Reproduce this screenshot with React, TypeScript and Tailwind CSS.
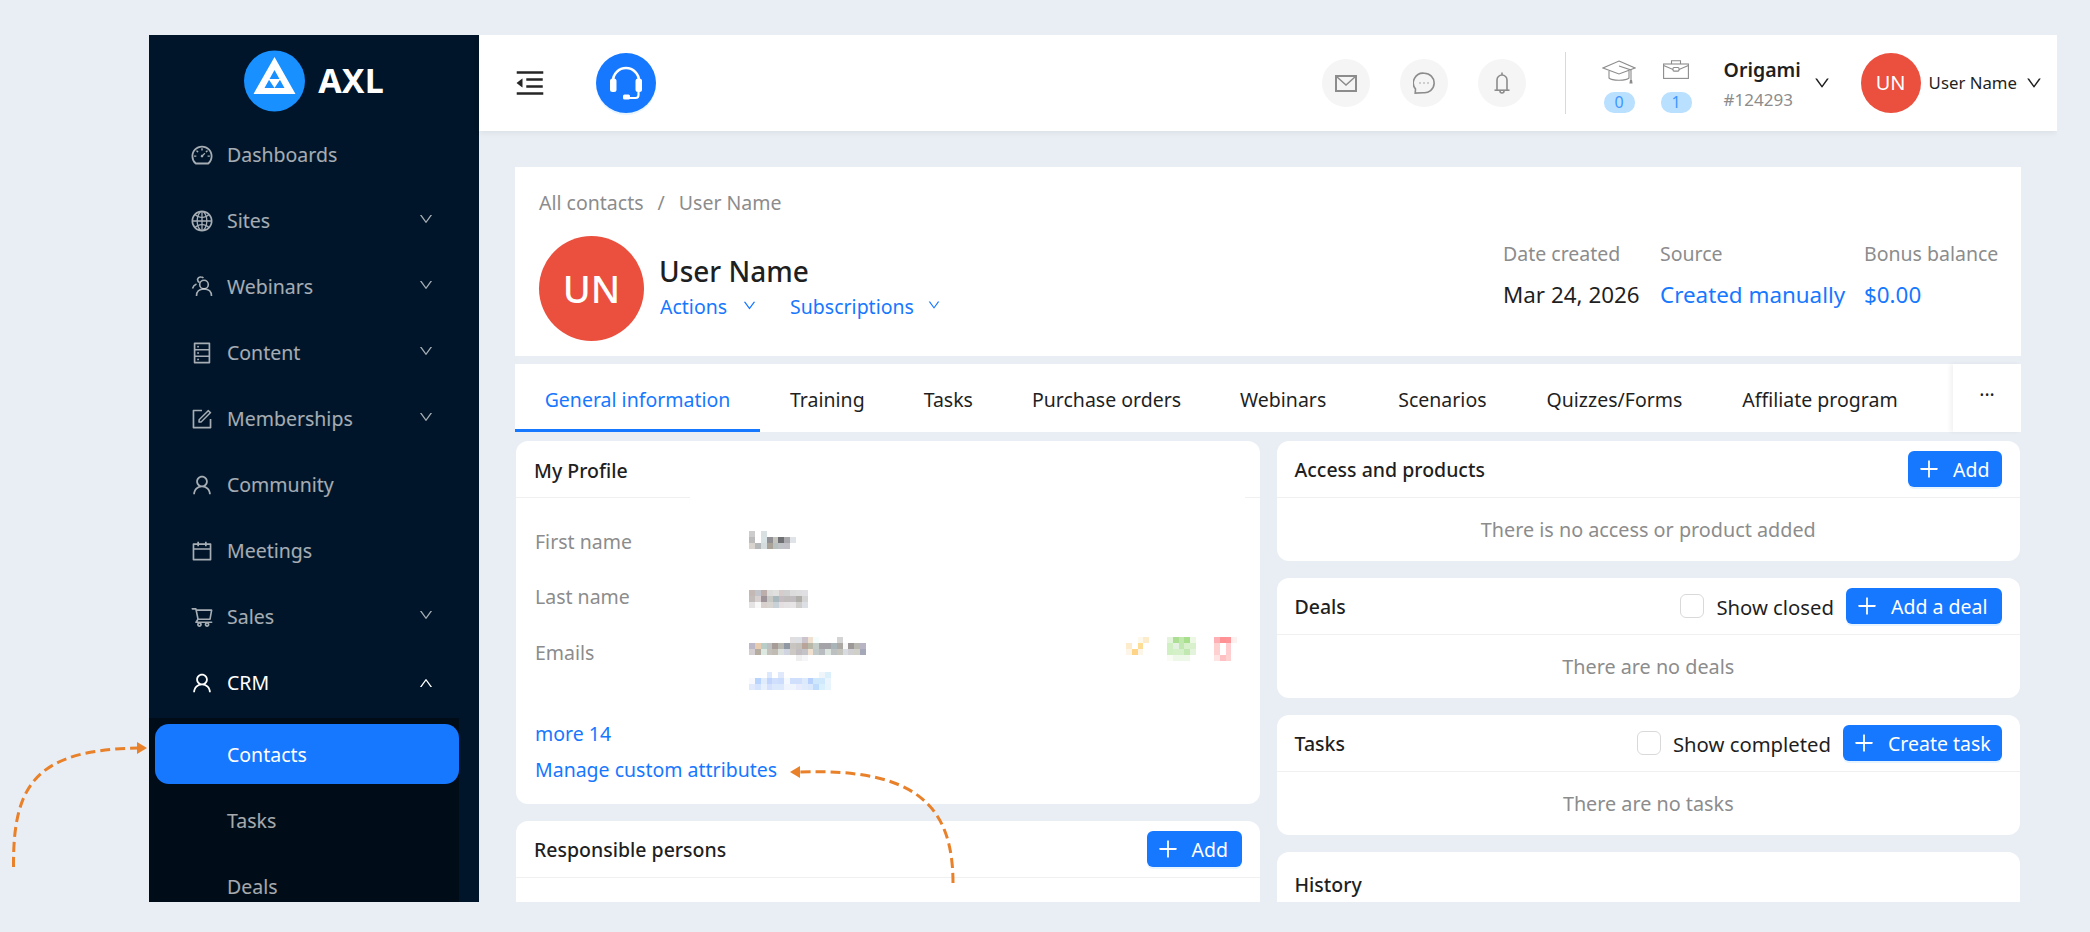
import {
  AiOutlineCalendar,
  AiOutlineDashboard,
  AiOutlineDatabase,
  AiOutlineDown,
  AiOutlineForm,
  AiOutlineGlobal,
  AiOutlineMenuFold,
  AiOutlinePlus,
  AiOutlineShoppingCart,
  AiOutlineUp,
  AiOutlineUser,
} from 'react-icons/ai';
import type { ReactNode } from 'react';

function WebinarIcon() {
  return (
    <svg width="24" height="24" viewBox="0 0 24 24" fill="none" stroke="currentColor" strokeWidth="1.6">
      <circle cx="14" cy="9.5" r="4.3" />
      <path d="M6.5 21c0-4.6 3-7 7.5-7s7.5 2.4 7.5 7" />
      <path d="M9.5 7.5A3.6 3.6 0 0 1 7.5 4.4 3.4 3.4 0 0 1 11 2c1 0 1.8.3 2.4 1" />
      <path d="M2.5 13.5c.6-2.2 2-3.6 4-4.4" />
    </svg>
  );
}

const menu = [
  { label: 'Dashboards', icon: <AiOutlineDashboard size={24} /> },
  { label: 'Sites', icon: <AiOutlineGlobal size={24} />, arrow: true },
  { label: 'Webinars', icon: <WebinarIcon />, arrow: true },
  { label: 'Content', icon: <AiOutlineDatabase size={24} />, arrow: true },
  { label: 'Memberships', icon: <AiOutlineForm size={24} />, arrow: true },
  { label: 'Community', icon: <AiOutlineUser size={24} /> },
  { label: 'Meetings', icon: <AiOutlineCalendar size={24} /> },
  { label: 'Sales', icon: <AiOutlineShoppingCart size={24} />, arrow: true },
];

function Sidebar() {
  return (
    <aside className="w-[330px] shrink-0 bg-[#001529] text-[19.5px] text-white/65">
      <div className="h-[90px] pt-[15px] flex justify-center">
        <div className="flex items-start gap-[13px]">
          <svg width="61" height="62" viewBox="0 0 61 62">
            <circle cx="30.5" cy="31" r="30.5" fill="#1890ff" />
            <path d="M30.5 7 L51.5 44 H9.5 Z M30.5 20 L20.5 38 H40.5 Z" fill="#fff" fillRule="evenodd" />
            <path d="M24.5 29 H36.5 L30.5 38 Z" fill="#fff" />
          </svg>
          <span className="text-[34px] font-bold text-white leading-[60px]">AXL</span>
        </div>
      </div>
      {menu.map(item => (
        <div key={item.label} className="h-[60px] mb-[6px] pl-[41px] pr-[45px] flex items-center">
          <span className="w-[24px] flex justify-center">{item.icon}</span>
          <span className="ml-[13px]">{item.label}</span>
          {item.arrow && <AiOutlineDown size={16} className="ml-auto -translate-y-[2px]" />}
        </div>
      ))}
      <div className="h-[60px] pl-[41px] pr-[45px] flex items-center text-white">
        <span className="w-[24px] flex justify-center"><AiOutlineUser size={24} /></span>
        <span className="ml-[13px]">CRM</span>
        <AiOutlineUp size={16} className="ml-auto" />
      </div>
      <div className="w-[310px] mt-[5px] pt-[6px] pb-[20px] bg-[#000c17]">
        <div className="ml-[6px] h-[60px] pl-[72px] pt-[2px] flex items-center rounded-[14px] bg-[#1677ff] text-white">Contacts</div>
        <div className="ml-[6px] h-[60px] mt-[6px] pl-[72px] pt-[2px] flex items-center">Tasks</div>
        <div className="ml-[6px] h-[60px] mt-[6px] pl-[72px] pt-[2px] flex items-center">Deals</div>
      </div>
    </aside>
  );
}

function RoundIcon({ children }: { children: ReactNode }) {
  return <div className="w-[48px] h-[48px] rounded-full bg-[#f5f5f5] flex items-center justify-center text-[#8c8c8c]">{children}</div>;
}

function Header() {
  return (
    <header className="h-[96px] shrink-0 bg-white shadow-[0_2px_6px_rgba(0,0,0,0.06)] flex items-center pl-[34px] pr-[14px]">
      <AiOutlineMenuFold size={34} className="text-[#262626]" />
      <div className="ml-[49px] w-[60px] h-[60px] rounded-full bg-[#1677ff] shadow-[0_2px_0_rgba(5,145,255,0.1)]">
        <svg width="60" height="60" viewBox="0 0 60 60" fill="none" stroke="#fff">
          <path d="M17 28 A13 13 0 0 1 43 28" strokeWidth="2.6" />
          <rect x="14" y="25.5" width="6.5" height="13.5" rx="2.5" fill="#fff" stroke="none" />
          <rect x="39.5" y="25.5" width="6.5" height="13.5" rx="2.5" fill="#fff" stroke="none" />
          <path d="M42.5 39 v3 q0 3 -3 3 H30" strokeWidth="2.2" />
          <rect x="27" y="41.5" width="7" height="5" rx="1.5" fill="#fff" stroke="none" />
        </svg>
      </div>
      <div className="ml-auto flex items-center gap-[30px]">
        <RoundIcon>
          <svg width="22" height="17" viewBox="0 0 22 17" fill="none" stroke="currentColor" strokeWidth="2">
            <rect x="1" y="1" width="20" height="15" />
            <path d="M1.5 1.5 L11 10 L20.5 1.5" strokeWidth="1.5" />
          </svg>
        </RoundIcon>
        <RoundIcon>
          <svg width="22" height="22" viewBox="0 0 22 22" fill="none" stroke="currentColor" strokeWidth="1.6">
            <path d="M11 1.2a9.8 9.8 0 1 1-1 19.5l-7.8.4.3-4A9.8 9.8 0 0 1 11 1.2z" />
            <circle cx="7" cy="11" r=".7" fill="currentColor" stroke="none" />
            <circle cx="11" cy="11" r=".7" fill="currentColor" stroke="none" />
            <circle cx="15" cy="11" r=".7" fill="currentColor" stroke="none" />
          </svg>
        </RoundIcon>
        <RoundIcon>
          <svg width="16" height="22" viewBox="0 0 16 22" fill="none" stroke="currentColor" strokeWidth="1.6">
            <path d="M8 .5v2M3 18V8a5 5 0 0 1 10 0v10" />
            <path d="M.5 18.2h15" />
            <path d="M6 19a2 2 0 0 0 4 0" />
          </svg>
        </RoundIcon>
      </div>
      <div className="ml-[39px] w-px h-[62px] bg-[#d9d9d9]" />
      <div className="ml-[38px] w-[31px] pt-[6px] flex flex-col items-center">
        <svg width="34" height="24" viewBox="0 0 34 24" fill="none" stroke="#8c8c8c" strokeWidth="1.1" className="shrink-0">
          <path d="M17 1 L33 8 L17 14 L1 8 Z" />
          <path d="M7 11v7c3 3 17 3 20 0v-7" />
          <path d="M17 6l12 4v10" />
          <path d="M28 20h2l.6 3.5h-3.2z" fill="#8c8c8c" stroke="none" />
        </svg>
        <Badge value="0" />
      </div>
      <div className="ml-[26px] w-[31px] pt-[6px] flex flex-col items-center">
        <svg width="26" height="19" viewBox="0 0 26 19" fill="none" stroke="#8c8c8c" strokeWidth="1.1" className="mb-[5px]">
          <rect x=".6" y="4" width="24.8" height="14.4" />
          <path d="M8.5 4V.8h9V4M.6 5.5l9.4 4h6l9.4-4" />
          <rect x="10" y="7.5" width="6" height="3.6" rx="1" fill="#fff" />
        </svg>
        <Badge value="1" />
      </div>
      <div className="ml-[32px] w-[89px] pt-[2px] flex flex-col">
        <span className="text-[19.5px] leading-[24px] font-semibold text-[#1f1f1f]">Origami</span>
        <span className="mt-[7px] text-[17px] leading-[22px] text-[#8c8c8c]">#124293</span>
      </div>
      <AiOutlineDown size={18} className="text-[#1f1f1f]" />
      <div className="ml-[30px] w-[60px] h-[60px] rounded-full bg-[#eb4f3e] text-white text-[20px] flex items-center justify-center">UN</div>
      <span className="ml-[8px] text-[16.8px] text-[#1f1f1f]">User Name</span>
      <AiOutlineDown size={18} className="ml-[8px] text-[#1f1f1f]" />
    </header>
  );
}

function Badge({ value }: { value: string }) {
  return <div className="mt-[8px] w-[31px] h-[21px] rounded-[10px] bg-[#bae0ff] text-[#4096ff] text-[16px] leading-[21px] text-center">{value}</div>;
}

function ContactCard() {
  return (
    <section className="h-[189px] bg-white px-[24px] pt-[24px] flex">
      <div className="flex-1">
        <div className="text-[19.5px] leading-[24px] text-[#8c8c8c]">All contacts<span className="mx-[14px]">/</span>User Name</div>
        <div className="mt-[21px] flex">
          <div className="w-[105px] h-[105px] rounded-full bg-[#eb4f3e] text-white text-[38px] font-medium flex items-center justify-center">UN</div>
          <div className="ml-[15px] pt-[16px]">
            <div className="text-[28px] leading-[40px] font-medium text-[#1f1f1f] -mt-[1px] mb-[1px]">User Name</div>
            <div className="mt-[2px] ml-[1px] flex items-center text-[19.5px] leading-[28px] text-[#1677ff]">
              Actions
              <AiOutlineDown size={15} className="ml-[15px] -translate-y-[2px]" />
              <span className="ml-[33px]">Subscriptions</span>
              <AiOutlineDown size={14} className="ml-[13px] -translate-y-[2px]" />
            </div>
          </div>
        </div>
      </div>
      <div className="flex pt-[50px]">
        <Meta label="Date created" className="w-[157px] text-[#1f1f1f]" value="Mar 24, 2026" />
        <Meta label="Source" className="w-[204px] text-[#1677ff]" value="Created manually" />
        <Meta label="Bonus balance" className="w-[133px] text-[#1677ff]" value="$0.00" />
      </div>
    </section>
  );
}

function Meta({ label, value, className }: { label: string; value: string; className: string }) {
  return (
    <div className={className}>
      <div className="text-[19.5px] leading-[26px] text-[#8c8c8c] whitespace-nowrap">{label}</div>
      <div className="mt-[14px] text-[22.4px] leading-[28px] whitespace-nowrap">{value}</div>
    </div>
  );
}

const tabs = ['Training', 'Tasks', 'Purchase orders'];

function Tabs() {
  return (
    <nav className="mt-[8px] h-[68px] bg-white flex text-[19.5px] text-[#1f1f1f]">
      <div className="w-[245px] mr-[0.5px] border-b-[3px] border-[#1677ff] text-[#1677ff] flex items-center justify-center pt-[6px]">General information</div>
      {tabs.map(t => (
        <div key={t} className="px-[29.5px] pt-[3px] flex items-center">{t}</div>
      ))}
      <div className="pl-[29.5px] pr-[42px] pt-[3px] flex items-center">Webinars</div>
      <div className="px-[30px] pt-[3px] flex items-center">Scenarios</div>
      <div className="px-[30px] pt-[3px] flex items-center">Quizzes/Forms</div>
      <div className="px-[30px] pt-[3px] flex items-center">Affiliate program</div>
      <div className="ml-auto w-[68px] shadow-[-3px_0_4px_rgba(0,0,0,0.05)] flex justify-center pt-[13px] leading-[24px]">...</div>
    </nav>
  );
}

function AddButton({ label, className }: { label: string; className: string }) {
  return (
    <button className={`h-[36px] pl-[9px] rounded-[6px] bg-[#1677ff] text-white text-[19.5px] flex items-center gap-[12px] shadow-[0_2px_0_rgba(5,145,255,0.1)] ${className}`}>
      <AiOutlinePlus size={24} />
      <span className="pt-[2px]">{label}</span>
    </button>
  );
}

function CheckLabel({ label }: { label: string }) {
  return (
    <label className="flex items-center gap-[12px] text-[20.3px] text-[#1f1f1f] mr-[12px]">
      <span className="w-[24px] h-[24px] rounded-[6px] border border-[#d9d9d9] bg-white" />
      <span className="pt-[2px]">{label}</span>
    </label>
  );
}

function Card({ title, empty, actions, className }: { title: string; empty?: string; actions?: ReactNode; className?: string }) {
  return (
    <section className={`bg-white rounded-[12px] ${className ?? ''}`}>
      <div className="h-[57px] pl-[18px] pr-[18px] border-b border-[#f0f0f0] flex items-center justify-between">
        <h3 className="pt-[2px] text-[19.5px] font-medium text-[#1f1f1f]">{title}</h3>
        {actions && <div className="flex items-center">{actions}</div>}
      </div>
      {empty && <div className="h-[63px] flex items-center justify-center text-[19.8px] text-[#8c8c8c]">{empty}</div>}
    </section>
  );
}

// pixelated (blurred out) values, one string per row, colours split by a space, "-" for nothing
function Mosaic({ rows, className }: { rows: string[]; className?: string }) {
  const cols = rows[0].split(' ').length;
  return (
    <svg
      width={Math.round(cols * 5.85)}
      height={rows.length * 6}
      viewBox={`0 0 ${cols * 6} ${rows.length * 6}`}
      preserveAspectRatio="none"
      shapeRendering="crispEdges"
      className={className}
    >
      {rows.map((row, y) =>
        row.split(' ').map((c, x) => (c === '-' ? null : <rect key={`${x}-${y}`} x={x * 6} y={y * 6} width="6" height="6" fill={`#${c}`} />)),
      )}
    </svg>
  );
}

const firstName = [
  'ccc - d8e0e2 - - - - -',
  'bbb - d8e2e4 8f8f94 c5c3bd 6f7074 a9a9ad e0e4e8',
  'd9d3ce b5b8b8 d5dcde a8a299 b8c0c0 bfc3c6 c0c0c6 -',
];
const lastName = [
  'c4b8b4 c2c4cc bcaeaa dcdcda e0e0de d6cccc d0d0d0 dcdcdc dedede e0e0e4',
  'c2bcba d8d0d0 9c9498 c8c8c4 a8b8bc c4bcc0 c0bcbc c0bcc0 b0aea8 d4d4d4',
  'e4e2e2 f8f8f8 d8d0cc d8d4d0 c8d0d8 e4dee0 e4e2e2 e6e4e4 d0cecc dce0e4',
];
const email = [
  '- - - - - - - e0dede dce0e4 ccc4cc f0e0d0 f4fcfc - - - d4d4d4 - - - -',
  'bcb8c8 e8ccb0 b8ccc8 bcc0c0 a89c98 b8b8b0 9098a4 c8c4c0 c4c0bc b8a498 b8b8a8 c4ccc8 a4a4a8 a4a4a8 a8b4b8 aca8a4 f8f8f8 9c9898 b8b8b0 b8b4c4',
  'd4ced0 b4aca0 dce8e0 c4c0bc c0bcb4 dce0dc d0d4e0 ccc8c4 c0bcc0 c4c4c8 f0e0d0 c0c8c8 b8bcc0 dce4e0 bcc0c0 c4c4bc d8dce0 d0d0d4 d0d0c8 a4a8b8',
  '- - - - - - - - efefef f6f6f8 - - - - - - - - - -',
];
const addEmail = [
  '- - - dce8fc - e0e8fc - - - - - - eef6fc dcf0fc',
  'f8f8ff b8d4fc e0ecfc c0d4fc d0e0fc ccdcfc f4f8ff d0e0fc d0e0fc dceafc b8d0fc d0e8fc d0e8fc eaf4fc',
  'e0eafc d4e4fc e8f0fc d4e0fc dce8fc dce8fc f0f4fc f0f4fc e8ecfc e0ecfc dce8fc c0dcfc d8f0fc e8f4fc',
];
const check = [
  '- - fdf8ec fdeccc',
  'fdeccc - fddc94 -',
  'fdf6e8 fdd488 fdf6e8 -',
];
const green = [
  'e4f4dc acdf94 c0e8ac a8df8c ecf8e4',
  'd0f0c4 e4f0e0 c0e8b0 d8f0cc d8f0cc',
  'd0f0c4 d4f0c8 d4f0c8 c0e8b0 e4f4dc',
  'f8fcf4 eef8e8 eef8e8 eef8e8 -',
];
const red = [
  'ffb0b4 ff9094 ff9498 fff0f0',
  'ffd0d0 - ffccd0 -',
  'ffd0d0 - ffccd0 -',
  'ffe4e4 ffc0c4 ffd0d0 -',
];

function ProfileRow({ label, children }: { label: string; children: ReactNode }) {
  return (
    <div className="flex">
      <div className="w-[214px] text-[19.5px] leading-[28px] text-[#8c8c8c]">{label}</div>
      {children}
    </div>
  );
}

function Profile() {
  return (
    <section className="h-[363px] bg-white rounded-[12px] relative">
      <div className="h-[56px] pl-[18px] pt-[3px] flex items-center text-[19.5px] font-medium text-[#1f1f1f]">My Profile</div>
      <div className="flex justify-between h-px">
        <div className="w-[174px] bg-[#f0f0f0]" />
        <div className="w-[15px] bg-[#f0f0f0]" />
      </div>
      <div className="pl-[19px] pr-[23px] pt-[30px]">
        <ProfileRow label="First name"><Mosaic rows={firstName} className="mt-[3px]" /></ProfileRow>
        <div className="mt-[27px]"><ProfileRow label="Last name"><Mosaic rows={lastName} className="mt-[7px]" /></ProfileRow></div>
        <div className="mt-[28px]">
          <ProfileRow label="Emails">
            <div className="flex-1">
              <div className="flex -mt-[2px]">
                <Mosaic rows={email} />
                <div className="ml-auto flex gap-[18px]">
                  <Mosaic rows={check} />
                  <Mosaic rows={green} />
                  <Mosaic rows={red} />
                </div>
              </div>
              <Mosaic rows={addEmail} className="mt-[11px]" />
            </div>
          </ProfileRow>
        </div>
        <div className="mt-[30px] text-[19.5px] leading-[28px] text-[#1677ff]">more 14</div>
        <div className="mt-[8px] text-[19.5px] leading-[28px] text-[#1677ff]">Manage custom attributes</div>
      </div>
    </section>
  );
}

export default function App() {
  return (
    <div className="relative h-[932px] overflow-hidden bg-[#e9eef5] pt-[35px] pl-[149px] font-['Noto_Sans',sans-serif]">
      <div className="w-[1908px] h-[867px] overflow-hidden flex">
        <Sidebar />
        <div className="flex-1 min-w-0 flex flex-col">
          <Header />
          <main className="px-[36px] pt-[36px]">
            <ContactCard />
            <Tabs />
            <div className="mt-[9px] px-[1px] grid grid-cols-2 gap-[17px]">
              <div className="flex flex-col gap-[17px]">
                <Profile />
                <Card title="Responsible persons" actions={<AddButton label="Add" className="w-[95px]" />} className="h-[120px]" />
              </div>
              <div className="flex flex-col gap-[17px]">
                <Card title="Access and products" empty="There is no access or product added" actions={<AddButton label="Add" className="w-[94px]" />} />
                <Card
                  title="Deals"
                  empty="There are no deals"
                  actions={<><CheckLabel label="Show closed" /><AddButton label="Add a deal" className="w-[156px]" /></>}
                />
                <Card
                  title="Tasks"
                  empty="There are no tasks"
                  actions={<><CheckLabel label="Show completed" /><AddButton label="Create task" className="w-[159px]" /></>}
                />
                <Card title="History" className="h-[120px] [&>div]:border-b-0 [&>div]:pt-[7px]" />
              </div>
            </div>
          </main>
        </div>
      </div>

      {/* orange annotation arrows over the screenshot */}
      <svg className="absolute left-0 top-0 pointer-events-none" width="1000" height="932" fill="none" stroke="#e8812a" strokeWidth="3">
        <path d="M13.5 867 C13 785 35 750 138 748" strokeDasharray="10 5" />
        <path d="M137 742 L147 748 L137 754 Z" fill="#e8812a" stroke="none" />
        <path d="M953 883 C953 805 915 768 800 772" strokeDasharray="10 5" />
        <path d="M800 766 L790 772 L800 778 Z" fill="#e8812a" stroke="none" />
      </svg>
    </div>
  );
}
